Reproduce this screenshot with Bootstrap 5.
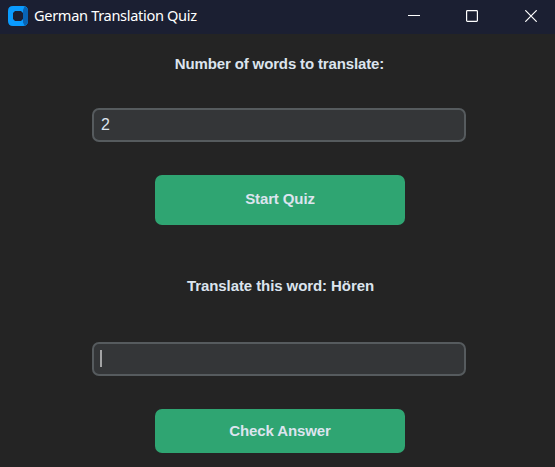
<!DOCTYPE html>
<html lang="en">
<head>
<meta charset="utf-8">
<meta name="viewport" content="width=device-width, initial-scale=1">
<title>German Translation Quiz</title>
<link href="https://cdn.jsdelivr.net/npm/bootstrap@5.3.0/dist/css/bootstrap.min.css" rel="stylesheet">
<style>
body { background: #242424; color: #dce4ee; font: 15px/20px "Liberation Sans", Arial, sans-serif; height: 100vh; overflow: hidden; }
.titlebar { height: 34px; background: #1b1f32; color: #fff; padding: 0 8px; }
.app-icon { margin-bottom: 3px; }
.app-title { font: 14.6px/20px "Noto Sans", "Open Sans", sans-serif; margin-left: 6px; padding-bottom: 4px; letter-spacing: -.34px; }
.win-btn { width: 18px; height: 18px; padding: 0; border: 0; background: none; display: flex; align-items: center; justify-content: center; }
.win-controls { gap: 40px 40px; margin-right: 7px; padding-bottom: 4px; }
.win-btn:last-child { margin-left: 1px; }
.win-controls { padding-bottom: 3px; }
.quiz-form { padding: 20px 0 0 5px; }
.quiz-label { font-weight: 700; line-height: 20px; letter-spacing: -.14px; }
.quiz-label.prompt { letter-spacing: -.08px; padding-left: 1px; }
.quiz-label.count { padding-right: 1px; }
.entry-wrap { width: 374px; position: relative; margin-right: 2px; }
.quiz-entry, .quiz-entry:focus { height: 34px; padding: 0 7px; border: 2px solid #565b5e; border-radius: 7px; background: #343638; color: #dce4ee; font-size: 16px; box-shadow: none; }
.caret { position: absolute; left: 8px; top: 8px; width: 2px; height: 17px; background: #a3a4a5; }
.quiz-btn, .quiz-btn:hover { width: 250px; height: 50px; padding: 0 0 2px; border: 0; border-radius: 7px; background: #2fa572; color: #dce4ee; font-size: 15px; font-weight: 700; letter-spacing: -.12px; }
.quiz-btn.check { height: 44px; padding: 0; }
.gap-entry { margin-top: 34px; }
.gap-btn { margin-top: 33px; }
.gap-question { margin-top: 51px; }
.gap-answer { margin-top: 46px; }
</style>
</head>
<body class="d-flex flex-column">
<header class="titlebar d-flex align-items-center">
  <svg class="app-icon" width="20" height="20" viewBox="0 0 20 20">
    <path fill="#0a9bff" fill-rule="evenodd" d="M5 0H15Q20 0 20 5V15Q20 20 15 20H5Q0 20 0 15V5Q0 0 5 0ZM7 5L5 7V13L7 15H13L15 13V7L13 5Z"/>
    <path fill="#0864b5" d="M16.5 0.4Q20 1.4 20 5V15Q20 18.6 16.5 19.6L15 16.5V4Z"/>
  </svg>
  <span class="app-title flex-grow-1">German Translation Quiz</span>
  <div class="win-controls d-flex">
    <button class="win-btn" aria-label="Minimize"><svg width="12" height="12"><path d="M0 5.5H12" stroke="#fff"/></svg></button>
    <button class="win-btn" aria-label="Maximize"><svg width="12" height="12"><rect x=".6" y=".6" width="10.8" height="10.8" rx=".8" fill="none" stroke="#fff" stroke-width="1.2"/></svg></button>
    <button class="win-btn" aria-label="Close"><svg width="12" height="12"><path d="M.3.3L11.7 11.7M11.7.3L.3 11.7" stroke="#fff" stroke-width="1.2"/></svg></button>
  </div>
</header>
<main class="quiz-form d-flex flex-column align-items-center">
  <label class="quiz-label count" for="count">Number of words to translate:</label>
  <div class="entry-wrap gap-entry"><input id="count" class="form-control quiz-entry" value="2"></div>
  <button class="btn quiz-btn gap-btn">Start Quiz</button>
  <label class="quiz-label prompt gap-question" for="answer">Translate this word: Hören</label>
  <div class="entry-wrap gap-answer"><input id="answer" class="form-control quiz-entry"><span class="caret"></span></div>
  <button class="btn quiz-btn check gap-btn">Check Answer</button>
</main>
<script src="https://cdn.jsdelivr.net/npm/bootstrap@5.3.0/dist/js/bootstrap.bundle.min.js"></script>
</body>
</html>
